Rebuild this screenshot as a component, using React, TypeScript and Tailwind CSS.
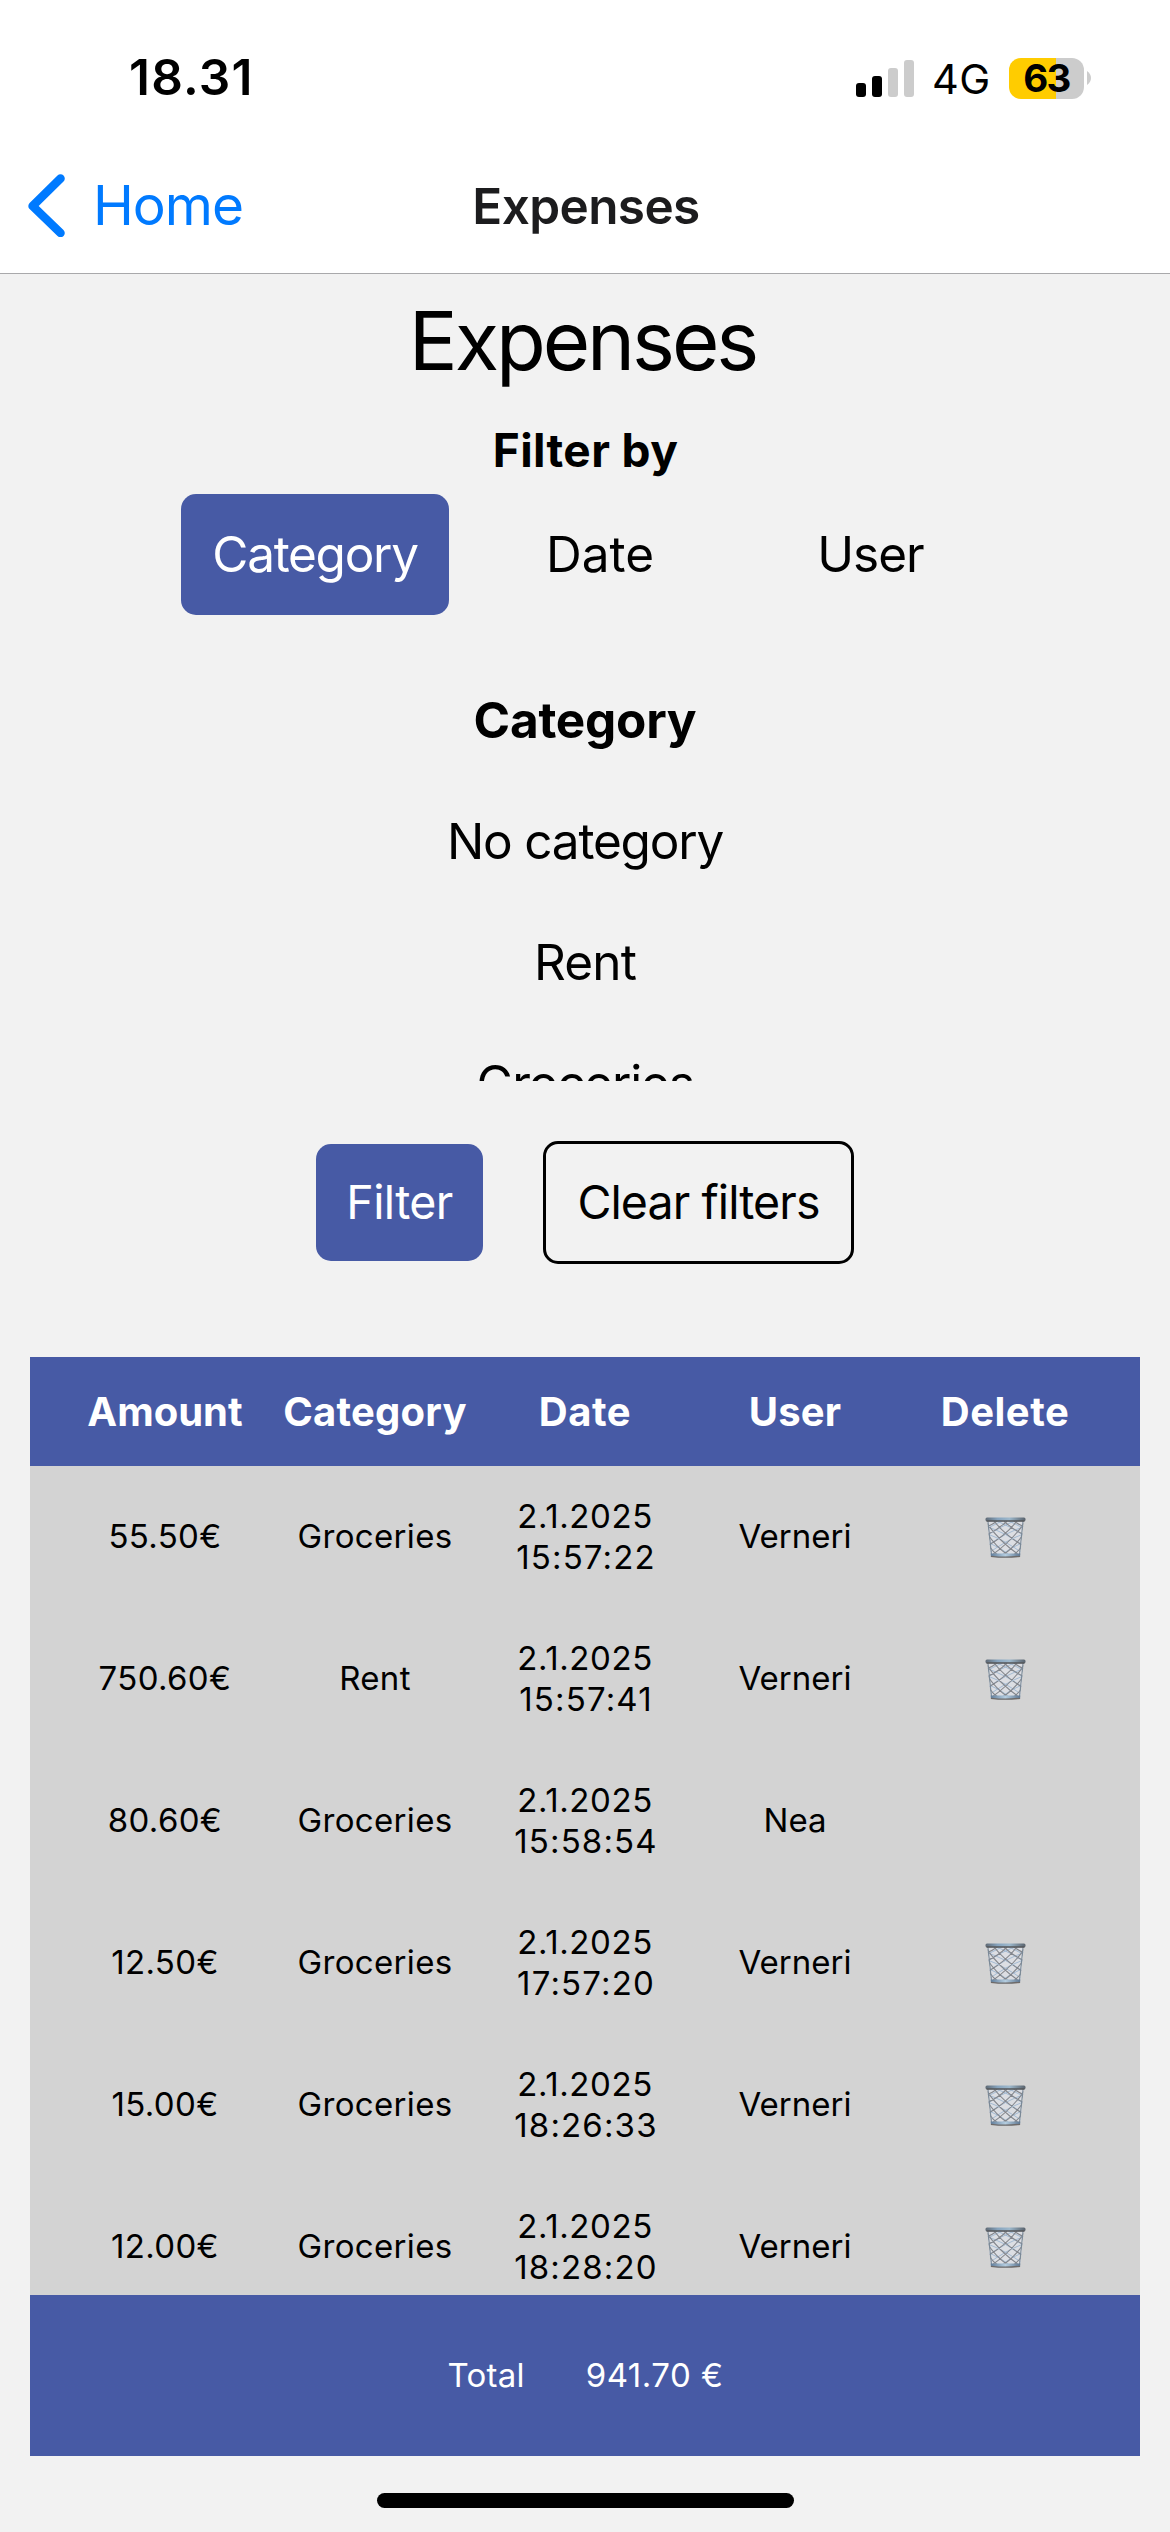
import React from 'react';

const tableColumns = [
  { label: 'Amount', spacing: 'tracking-normal' },
  { label: 'Category', spacing: 'tracking-[0.25px]' },
  { label: 'Date', spacing: 'tracking-[0.6px]' },
  { label: 'User', spacing: 'tracking-[0.2px]' },
  { label: 'Delete', spacing: 'tracking-[0.5px]' },
];

const expenses = [
  { amount: '55.50€', category: 'Groceries', date: '2.1.2025', time: '15:57:22', user: 'Verneri', own: true },
  { amount: '750.60€', category: 'Rent', date: '2.1.2025', time: '15:57:41', user: 'Verneri', own: true },
  { amount: '80.60€', category: 'Groceries', date: '2.1.2025', time: '15:58:54', user: 'Nea', own: false },
  { amount: '12.50€', category: 'Groceries', date: '2.1.2025', time: '17:57:20', user: 'Verneri', own: true },
  { amount: '15.00€', category: 'Groceries', date: '2.1.2025', time: '18:26:33', user: 'Verneri', own: true },
  { amount: '12.00€', category: 'Groceries', date: '2.1.2025', time: '18:28:20', user: 'Verneri', own: true },
];

function WastebasketDefs() {
  return (
    <svg width="0" height="0" className="absolute" aria-hidden="true">
      <defs>
        <clipPath id="basket-body">
          <path d="M2.3 4 H38.7 L35 39 H6 Z" />
        </clipPath>
        <linearGradient id="basket-rim" x1="0" x2="1" y1="0" y2="0">
          <stop offset="0" stopColor="#5f6a75" />
          <stop offset="0.3" stopColor="#86a3bd" />
          <stop offset="0.6" stopColor="#9db8cc" />
          <stop offset="1" stopColor="#59626c" />
        </linearGradient>
        <linearGradient id="basket-base" x1="0" x2="1" y1="0" y2="0">
          <stop offset="0" stopColor="#5f7c9a" />
          <stop offset="0.5" stopColor="#b4cde0" />
          <stop offset="1" stopColor="#5c7590" />
        </linearGradient>
      </defs>
    </svg>
  );
}

function Wastebasket() {
  return (
    <svg width="41" height="41" viewBox="0 0 41 41" fill="none" aria-label="Delete expense">
      <path d="M2.3 4 H38.7 L35 39 H6 Z" fill="#dcdee3" />
      <g clipPath="url(#basket-body)">
        <path
          stroke="#a3bad2"
          strokeWidth="1"
          d="M0 9 Q20 15 42 31 M0 16 Q20 23 40 38 M0 24 Q16 30 30 42 M6 2 Q24 8 44 22 M20 2 L44 14 M41 9 Q21 15 -1 31 M41 16 Q21 23 1 38 M41 24 Q25 30 11 42 M35 2 Q17 8 -3 22 M21 2 L-3 14"
        />
        <path
          stroke="#83868c"
          strokeWidth="1.1"
          d="M1 5 Q14 24 34 38 M9 4 Q20 18 37 28 M19 4 Q28 13 40 18 M29 4 Q34 8 40 10 M2 16 Q10 29 24 39 M4 29 Q8 35 14 39 M40 5 Q27 24 7 38 M32 4 Q21 18 4 28 M22 4 Q13 13 1 18 M12 4 Q7 8 1 10 M39 16 Q31 29 17 39 M37 29 Q33 35 27 39"
        />
        <path stroke="#7a8997" strokeWidth="1.4" d="M2.8 4 L6.5 39 M38.2 4 L34.5 39" />
      </g>
      <path d="M5.6 36.5 H35.4 L35 39.5 Q20.5 41.5 6 39.5 Z" fill="url(#basket-base)" />
      <path d="M5.9 39.3 Q20.5 41 35.1 39.3" stroke="#6e6a68" strokeWidth="1.3" />
      <rect x="0.5" y="0.6" width="40" height="3.6" rx="1.5" fill="url(#basket-rim)" />
      <path d="M1.5 4 H39.5" stroke="#555658" strokeWidth="1.3" />
    </svg>
  );
}

function StatusBar() {
  return (
    <div className="flex h-[156px] items-center pl-[129px] pr-[79px]">
      <span className="text-[49.5px] leading-none font-semibold tracking-[1.2px]">18.31</span>
      <div className="ml-auto flex h-[41px] items-center">
        <div className="flex h-[37px] items-end gap-[6px]">
          <i className="h-[14px] w-[10px] rounded-[3px] bg-black" />
          <i className="h-[21px] w-[10px] rounded-[3px] bg-black" />
          <i className="h-[29px] w-[10px] rounded-[3px] bg-[#cccccc]" />
          <i className="h-[37px] w-[10px] rounded-[3px] bg-[#cccccc]" />
        </div>
        <span className="mt-[3px] ml-[18px] w-[77px] text-[41.5px] leading-none tracking-[0.4px]">4G</span>
        <div className="flex h-[41px] w-[75px] items-center justify-center rounded-[12px] bg-[linear-gradient(90deg,#ffcc00_63%,#cccccc_63%)]">
          <span className="text-[38.5px] leading-none font-bold tracking-[-1.7px]">63</span>
        </div>
        <svg width="4" height="14" viewBox="0 0 4 14" className="ml-[3px]">
          <path d="M0 0 Q4 3 4 7 T0 14 Z" fill="#cccccc" />
        </svg>
      </div>
    </div>
  );
}

function NavigationHeader() {
  return (
    <header className="grid h-[118px] grid-cols-3 border-b border-[#a9a9ab] bg-white">
      <div className="flex h-[98px] items-center pl-[28px] text-[#007aff]">
        <svg width="37" height="63" viewBox="0 0 37 63" fill="none">
          <path d="M32.5 4.5 L4.6 32 L32.5 59" stroke="currentColor" strokeWidth="8.6" strokeLinecap="round" strokeLinejoin="round" />
        </svg>
        <span className="ml-[28px] text-[55px] leading-none tracking-[-1px]">Home</span>
      </div>
      <div className="flex h-[102px] items-center justify-center pl-[2px] text-[49.5px] leading-none font-semibold tracking-[-0.6px] text-[#1c1c1e]">
        Expenses
      </div>
    </header>
  );
}

export default function App() {
  return (
    <div className="flex h-[2532px] w-[1170px] flex-col overflow-hidden bg-[#f2f2f2] font-['Inter',sans-serif] text-black">
      <WastebasketDefs />
      <div className="bg-white">
        <StatusBar />
        <NavigationHeader />
      </div>

      <main className="flex flex-col">
        <h1 className="flex h-[133px] items-center justify-center pr-[5px] text-[81.4px] leading-none tracking-[-3.1px]">Expenses</h1>
        <h2 className="flex h-[87px] items-center justify-center pb-[2px] pl-px text-[46px] leading-none font-bold tracking-[0.4px]">Filter by</h2>

        <div className="ml-[181px] flex h-[121px] items-center text-[49.5px] leading-none">
          <button className="h-full w-[268px] rounded-[15px] bg-[#475aa5] tracking-[-1.3px] text-white">Category</button>
          <button className="h-full w-[302px] tracking-normal">Date</button>
          <button className="h-full w-[239px] tracking-[-1px]">User</button>
        </div>

        <div className="mt-[45px] flex h-[421px] flex-col overflow-y-hidden text-[49.5px] leading-none">
          <div className="flex h-[121px] shrink-0 items-center justify-center font-bold tracking-[-0.25px]">Category</div>
          <div className="flex h-[121px] shrink-0 items-center justify-center tracking-[-1.2px]">No category</div>
          <div className="flex h-[121px] shrink-0 items-center justify-center tracking-[-0.85px]">Rent</div>
          <div className="flex h-[121px] shrink-0 items-center justify-center tracking-[-1.2px]">Groceries</div>
        </div>

        <div className="mt-[60px] flex h-[123px] items-center justify-center gap-[60px] text-[46.5px] leading-none">
          <button className="h-[117px] w-[167px] rounded-[15px] bg-[#475aa5] tracking-[-0.6px] text-white">Filter</button>
          <button className="h-[123px] w-[311px] rounded-[15px] border-[3px] border-black tracking-[-0.9px]">Clear filters</button>
        </div>

        <section className="mx-[30px] mt-[93px] h-[1099px]">
          <div className="grid h-[109px] grid-cols-5 items-center bg-[#475aa5] px-[30px] text-center text-[40px] leading-none font-bold text-white">
            {tableColumns.map((column) => (
              <span key={column.label} className={column.spacing}>
                {column.label}
              </span>
            ))}
          </div>
          <div className="h-[829px] overflow-hidden bg-[#d3d3d3]">
            {expenses.map((expense) => (
              <div key={expense.time} className="grid h-[142px] grid-cols-5 items-center px-[30px] text-center text-[33px] leading-[41px] tracking-[0.35px]">
                <span className="pb-[2px]">{expense.amount}</span>
                <span className="pb-[2px]">{expense.category}</span>
                <span className="flex flex-col">
                  <span className="tracking-[0.6px]">{expense.date}</span>
                  <span className="pl-[2px] tracking-[1.15px]">{expense.time}</span>
                </span>
                <span className="pb-[2px] tracking-normal">{expense.user}</span>
                <span className="flex justify-center">{expense.own && <Wastebasket />}</span>
              </div>
            ))}
          </div>
          <div className="flex h-[161px] items-center justify-center gap-[61px] bg-[#475aa5] pl-px text-[33px] leading-none text-white">
            <span className="tracking-[0.25px]">Total</span>
            <span className="tracking-[0.5px]">941.70 €</span>
          </div>
        </section>
      </main>

      <div className="mx-auto mt-[37px] h-[15px] w-[417px] rounded-full bg-black" />
    </div>
  );
}
